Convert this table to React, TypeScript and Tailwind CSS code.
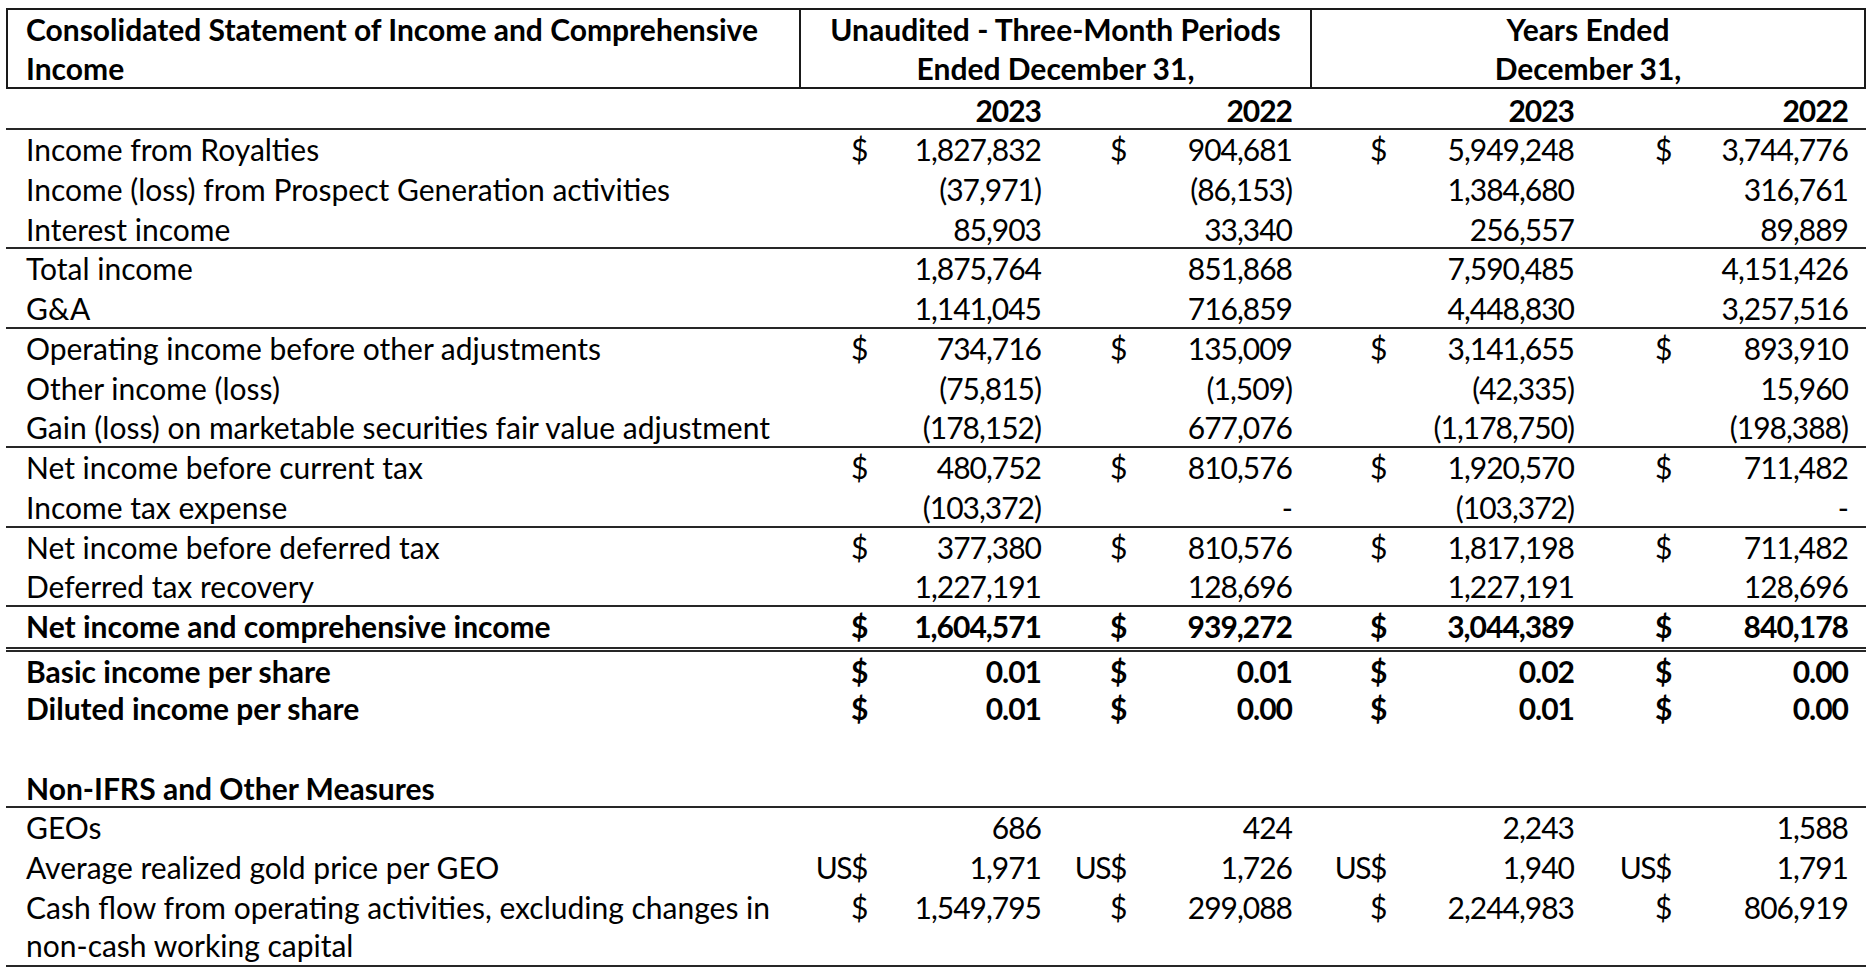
import clsx from "clsx";

type Row = {
  label: string;
  label2?: string;
  cur?: string;
  vals?: string[];
  bold?: boolean;
  rule?: boolean;
  double?: boolean;
  blank?: boolean;
};

const GRID = "grid grid-cols-[793px_88px_175px_84px_164px_94px_188px_96px_178px]";

// right padding of the currency and number cells, per period column
const curPad = ["pr-[20px]", "pr-[20px]", "pr-[18px]", "pr-[17px]"];
const numPad = ["pr-[21px]", "pr-[18px]", "pr-[18px]", "pr-[18px]"];

const rows: Row[] = [
  { label: "Income from Royalties", cur: "$", vals: ["1,827,832", "904,681", "5,949,248", "3,744,776"] },
  { label: "Income (loss) from Prospect Generation activities", vals: ["(37,971)", "(86,153)", "1,384,680", "316,761"] },
  { label: "Interest income", vals: ["85,903", "33,340", "256,557", "89,889"], rule: true },
  { label: "Total income", vals: ["1,875,764", "851,868", "7,590,485", "4,151,426"] },
  { label: "G&A", vals: ["1,141,045", "716,859", "4,448,830", "3,257,516"], rule: true },
  { label: "Operating income before other adjustments", cur: "$", vals: ["734,716", "135,009", "3,141,655", "893,910"] },
  { label: "Other income (loss)", vals: ["(75,815)", "(1,509)", "(42,335)", "15,960"] },
  { label: "Gain (loss) on marketable securities fair value adjustment", vals: ["(178,152)", "677,076", "(1,178,750)", "(198,388)"], rule: true },
  { label: "Net income before current tax", cur: "$", vals: ["480,752", "810,576", "1,920,570", "711,482"] },
  { label: "Income tax expense", vals: ["(103,372)", "-", "(103,372)", "-"], rule: true },
  { label: "Net income before deferred tax", cur: "$", vals: ["377,380", "810,576", "1,817,198", "711,482"] },
  { label: "Deferred tax recovery", vals: ["1,227,191", "128,696", "1,227,191", "128,696"], rule: true },
  { label: "Net income and comprehensive income", cur: "$", vals: ["1,604,571", "939,272", "3,044,389", "840,178"], bold: true },
  { label: "Basic income per share", cur: "$", vals: ["0.01", "0.01", "0.02", "0.00"], bold: true, double: true },
  { label: "Diluted income per share", cur: "$", vals: ["0.01", "0.00", "0.01", "0.00"], bold: true },
  { label: "", blank: true },
  { label: "Non-IFRS and Other Measures", bold: true, rule: true },
  { label: "GEOs", vals: ["686", "424", "2,243", "1,588"] },
  { label: "Average realized gold price per GEO", cur: "US$", vals: ["1,971", "1,726", "1,940", "1,791"] },
  {
    label: "Cash flow from operating activities, excluding changes in",
    label2: "non-cash working capital",
    cur: "$",
    vals: ["1,549,795", "299,088", "2,244,983", "806,919"],
    rule: true,
  },
];

function DataRow({ row }: { row: Row }) {
  return (
    <div
      className={clsx(
        GRID,
        "leading-[38px] border-[#262626]",
        row.double ? "h-[42.25px] border-t-[5px] border-double" : row.label2 ? "h-[79.5px]" : "h-[39.75px]",
        row.rule && "border-b-2",
        row.bold && "font-bold"
      )}
    >
      <div className="pl-[20px] whitespace-nowrap">
        {row.label}
        {row.label2 && (
          <>
            <br />
            {row.label2}
          </>
        )}
      </div>
      {[0, 1, 2, 3].map((i) => (
        <div key={i} className="contents">
          <div className={clsx("text-right whitespace-nowrap tracking-[-1.5px]", curPad[i])}>{row.cur}</div>
          <div className={clsx("text-right whitespace-nowrap tracking-[-1px]", numPad[i])}>{row.vals?.[i]}</div>
        </div>
      ))}
    </div>
  );
}

export default function App() {
  const years = ["2023", "2022", "2023", "2022"];

  return (
    <div className="min-h-screen bg-white text-black font-['Lato',sans-serif] text-[30px] pt-[8px]">
      <div className="ml-[6px] w-[1860px]">
        {/* Title band */}
        <div className="grid grid-cols-[791px_511px_554px] h-[81px] border-2 border-[#1a1a1a] font-bold leading-[39px]">
          <div className="pl-[18px] whitespace-nowrap">
            Consolidated Statement of Income and Comprehensive
            <br />
            Income
          </div>
          <div className="border-l-2 border-[#1a1a1a] text-center whitespace-nowrap">
            Unaudited - Three-Month Periods
            <br />
            Ended December 31,
          </div>
          <div className="border-l-2 border-[#1a1a1a] text-center whitespace-nowrap">
            Years Ended
            <br />
            December 31,
          </div>
        </div>

        {/* Year headings */}
        <div className={clsx(GRID, "h-[41px] pt-[2px] leading-[38px] font-bold border-b-2 border-[#262626]")}>
          <div />
          {years.map((y, i) => (
            <div key={i} className="contents">
              <div />
              <div className={clsx("text-right tracking-[-1px]", numPad[i])}>{y}</div>
            </div>
          ))}
        </div>

        {rows.map((row, i) => (
          <DataRow key={i} row={row} />
        ))}
      </div>
    </div>
  );
}
